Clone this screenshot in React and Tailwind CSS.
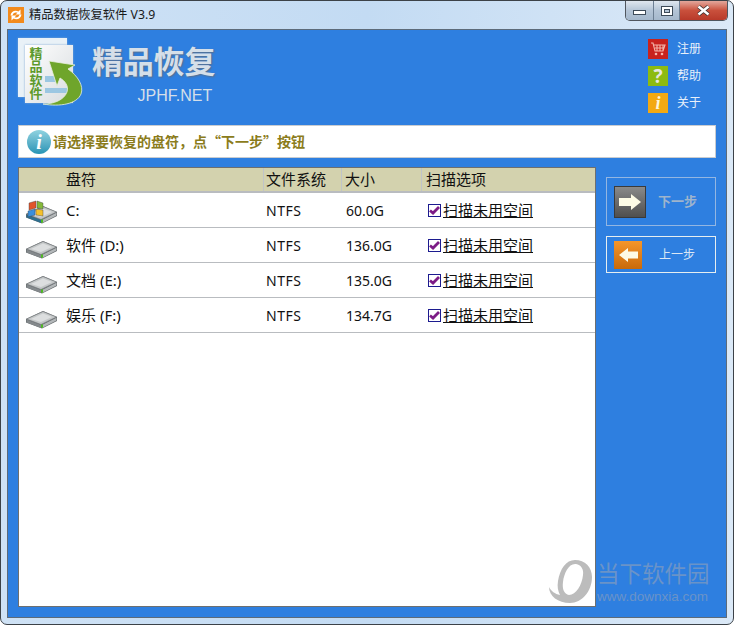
import React from "react";

const rows = [
  { name: "C:", size: "60.0G", sys: true },
  { name: "软件 (D:)", size: "136.0G" },
  { name: "文档 (E:)", size: "135.0G" },
  { name: "娱乐 (F:)", size: "134.7G" },
];

const AppIcon = () => (
  <svg width="16" height="16" viewBox="0 0 16 16">
    <rect width="16" height="16" fill="#f28a1c" />
    <path d="M2.5 8.5C3 4.5 7 2.5 10.5 4.5L12.5 2.5V7.5H7.5L9.5 5.8C7 4.8 5 6 4.5 8.5Z" fill="#fff" />
    <path d="M13.5 7.5C13 11.5 9 13.5 5.5 11.5L3.5 13.5V8.5H8.5L6.5 10.2C9 11.2 11 10 11.5 7.5Z" fill="#fff" />
  </svg>
);

const WindowButtons = () => (
  <div className="flex h-[20px] w-[103px] overflow-hidden rounded-b-[5px] border border-t-0 border-[#50565e]">
    <div className="flex w-[28px] items-center justify-center border-r border-[#6d7f93] bg-gradient-to-b from-[#dfe6ee] via-[#b4c4d6] to-[#a5b8cc]">
      <div className="mt-[3px] h-[5px] w-[13px] border border-[#3d4a58] bg-white" />
    </div>
    <div className="flex w-[26px] items-center justify-center border-r border-[#6d7f93] bg-gradient-to-b from-[#dfe6ee] via-[#b4c4d6] to-[#a5b8cc]">
      <div className="flex h-[10px] w-[12px] items-center justify-center border border-[#3d4a58] bg-white">
        <div className="h-[4px] w-[6px] border border-[#3d4a58] bg-[#b4c4d6]" />
      </div>
    </div>
    <div className="flex flex-1 items-center justify-center bg-gradient-to-b from-[#e2a79c] via-[#c9503c] to-[#b83a2a]">
      <svg width="13" height="11" viewBox="0 0 13 11">
        <path d="M1.5 1.5l10 8M11.5 1.5l-10 8" stroke="#33302f" strokeWidth="4" />
        <path d="M1.5 1.5l10 8M11.5 1.5l-10 8" stroke="#fff" strokeWidth="2.6" />
      </svg>
    </div>
  </div>
);

const Logo = () => (
  <div className="relative h-[70px] w-[66px] shrink-0">
    <div className="absolute left-0 top-0 h-[59px] w-[49px] bg-[#e9f1f7] shadow-[0_0_2px_#7fa7d4]" />
    <div className="absolute left-[7px] top-[7px] h-[58px] w-[48px] bg-gradient-to-br from-white to-[#d8dcdf] shadow-[0_0_2px_#7fa7d4]" />
    <div className="absolute left-[11px] top-[9px] w-[14px] text-center text-[13px] font-bold leading-[13.4px] text-[#5d9a2b]">
      精品软件
    </div>
    <svg className="absolute left-0 top-0" width="66" height="70" viewBox="0 0 66 70">
      <rect x="27" y="38" width="13" height="6" fill="#9cc7e2" />
      <rect x="27" y="50" width="23" height="5" fill="#9cc7e2" />
      <path
        d="M31 23L57 27L50 31C60 38 66 48 63 56C59 66 42 69 25 66C36 66 46 62 49 54C51 48 47 43 42 40L39 48Z"
        fill="#6fa52b"
        stroke="#e8f0e0"
        strokeWidth="0.8"
      />
    </svg>
  </div>
);

const MenuItem = ({ bg, label, children }) => (
  <div className="flex h-[20px] items-center gap-[9px]">
    <div className={`flex h-[20px] w-[20px] items-center justify-center ${bg}`}>{children}</div>
    <span className="text-[12px] text-[#e8f0fa]">{label}</span>
  </div>
);

const DriveIcon = ({ sys }) => (
  <svg width="34" height="28" viewBox="0 0 34 28">
    <path d="M1 18L18 10L32 16V20L17 27.5L1 21.5Z" fill="#5f6467" />
    <path d="M1.5 18L18 10.5L31.5 16L16 23.5Z" fill="#c4c7c8" stroke="#7b8083" strokeWidth="0.7" />
    <path d="M6 18L18 12.5L27 16L16 21Z" fill="#dcdedf" />
    <path d="M1.5 18.5L16 24V27L1.5 21.5Z" fill={sys ? "#2f6f8f" : "#84898c"} />
    <path d="M17 24L31.5 16.8V19.6L17 27Z" fill="#b3b7b9" />
    <rect x="16" y="23.5" width="2" height="3.2" fill="#4dbb22" />
    {sys && (
      <g stroke="#3a3f44" strokeWidth="0.4">
        <path d="M4 7L11 5V12L4 14Z" fill="#e2552b" />
        <path d="M12 5L18 7V13L12 12Z" fill="#85b93a" />
        <path d="M3 15L10 13V19L3 21Z" fill="#3a8fdc" />
        <path d="M11 13L18 14V20L11 19Z" fill="#f5c02c" />
      </g>
    )}
  </svg>
);

const Check = () => (
  <span className="flex h-[13px] w-[13px] items-center justify-center border border-[#1c1b8f] bg-white">
    <svg width="11" height="9" viewBox="0 0 11 9">
      <path d="M1 4.5L4 7l6-6" fill="none" stroke="#7d1c86" strokeWidth="2.8" />
    </svg>
  </span>
);

const HeadCell = ({ className, children }) => (
  <div className={`flex h-full items-center border-r border-[#c0c4c8] pl-[2px] text-[15px] text-[#111] ${className}`}>
    {children}
  </div>
);

const Row = ({ name, size, sys }) => (
  <div className="flex h-[35px] items-center border-b border-[#b9bcc0] text-[14px] text-[#111]">
    <div className="flex w-[245px] items-center">
      <div className="ml-[6px] w-[41px]">
        <DriveIcon sys={sys} />
      </div>
      <span className="text-[15px]">{name}</span>
    </div>
    <div className="w-[78px] pl-[2px] tracking-[0.5px]">NTFS</div>
    <div className="w-[80px] pl-[4px]">{size}</div>
    <div className="flex items-center gap-[2px] pl-[6px]">
      <Check />
      <span className="text-[15px] underline">扫描未用空间</span>
    </div>
  </div>
);

const Watermark = () => (
  <div className="pointer-events-none absolute left-[549px] top-[560px] flex items-start gap-[5px]">
    <svg width="43" height="44" viewBox="0 0 43 44">
      <path
        fillRule="evenodd"
        d="M26 0C36 0 43 7 43 17C43 31 33 43 21 43C9 43 0 36 0 27C2 31 6 34 11 35C9 31 8 27 9 21C11 9 17 0 26 0ZM27 4C20 3 15 13 14 22C13 29 15 34 20 35C27 35 33 25 34 15C35 9 32 5 27 4Z"
        fill="#bcbcbc"
      />
    </svg>
    <div className="text-[#6a93c8]">
      <div className="text-[22.5px] leading-[28px]">当下软件园</div>
      <div className="font-['Liberation_Sans'] text-[13.5px] leading-[18px]">www.downxia.com</div>
    </div>
  </div>
);

export default function App() {
  return (
    <div className="relative h-[625px] w-[734px] overflow-hidden bg-white font-['Noto_Sans','Noto_Sans_CJK_SC',sans-serif]">
      <div className="flex h-[625px] flex-col rounded-[7px] border border-[#3c4248] bg-gradient-to-r from-[#cfe2f5] via-[#c3dbf3] to-[#dbe9f7] px-[6px] pb-[6px]">
        <div className="flex h-[28px] items-start justify-between">
          <div className="flex h-[28px] items-center gap-[5px] pl-[1px]">
            <AppIcon />
            <span className="text-[12.3px] text-[#1a1a1a]">精品数据恢复软件 V3.9</span>
          </div>
          <div className="mr-[-1px]">
            <WindowButtons />
          </div>
        </div>

        <div className="flex flex-1 flex-col border border-[#5d6b7a] bg-[#2e7fe0] pl-[10px] pr-[10px]">
          <div className="flex h-[95px] justify-between pr-[15px] pt-[8px]">
            <div className="flex">
              <Logo />
              <div className="ml-[8px] flex flex-col items-end">
                <div className="mt-[3px] text-[31px] font-bold leading-[40px] tracking-[-0.2px] text-[#d5dfe9] [text-shadow:1px_1px_2px_#5a6f8a]">精品恢复</div>
                <div className="mr-[3px] mt-[3px] font-['Liberation_Sans'] text-[16px] text-[#d5dfe9]">JPHF.NET</div>
              </div>
            </div>
            <div className="mt-[1px] flex flex-col gap-[7px]">
              <MenuItem bg="bg-[#c8221e]" label="注册">
                <svg width="16" height="14" viewBox="0 0 16 14">
                  <path d="M1 1h2l2 8h8l2-6H4M5 6h9M7 3v6M10 3v6M13 3v6" fill="none" stroke="#f4b5ab" strokeWidth="1.1" />
                  <circle cx="6" cy="12" r="1.3" fill="#f4b5ab" />
                  <circle cx="12" cy="12" r="1.3" fill="#f4b5ab" />
                </svg>
              </MenuItem>
              <MenuItem bg="bg-[#8dbb10]" label="帮助">
                <span className="text-[19px] font-bold leading-none text-[#e6e6df]">?</span>
              </MenuItem>
              <MenuItem bg="bg-[#f3a912]" label="关于">
                <span className="font-['Liberation_Serif'] text-[18px] font-bold italic leading-none text-[#fdf6dd]">i</span>
              </MenuItem>
            </div>
          </div>

          <div className="flex h-[33px] items-center gap-[2px] border border-[#c9ccd0] bg-white pl-[8px]">
            <div className="flex h-[24px] w-[24px] items-center justify-center rounded-full bg-gradient-to-b from-[#8fd3e0] to-[#2494b5]">
              <span className="font-['Liberation_Serif'] text-[20px] font-bold italic leading-none text-white">i</span>
            </div>
            <span className="font-['Noto_Sans_CJK_SC'] text-[14px] font-bold text-[#8b7c1c]">请选择要恢复的盘符，点“下一步”按钮</span>
          </div>

          <div className="mt-[9px] flex flex-1 gap-[10px] pb-[10px]">
            <div className="flex w-[578px] flex-col border border-[#6d6f70] bg-white">
              <div className="flex h-[25px] items-center border-b-2 border-[#b9bcc0] bg-[#d3d2ae]">
                <HeadCell className="w-[245px] pl-[47px]">盘符</HeadCell>
                <HeadCell className="w-[78px]">文件系统</HeadCell>
                <HeadCell className="w-[80px] pl-[3px]">大小</HeadCell>
                <div className="pl-[4px] text-[15px] text-[#111]">扫描选项</div>
              </div>
              {rows.map((r) => (
                <Row key={r.name} {...r} />
              ))}
            </div>

            <div className="flex flex-1 flex-col gap-[10px] pt-[10px]">
              <div className="flex h-[49px] items-center gap-[12px] border border-[#93b6e2] pl-[7px]">
                <div className="flex h-[32px] w-[32px] items-center justify-center border border-[#3a3a3a] bg-gradient-to-b from-[#8a8a8a] to-[#4f4f4f]">
                  <svg width="22" height="16" viewBox="0 0 22 16">
                    <path d="M0 4h12V0l10 8-10 8v-4H0z" fill="#fdfbe6" />
                  </svg>
                </div>
                <span className="text-[13px] font-bold text-[#9fb4cc]">下一步</span>
              </div>
              <div className="flex h-[37px] items-center gap-[17px] border border-[#e6eef0] pl-[7px]">
                <div className="flex h-[28px] w-[28px] items-center justify-center bg-gradient-to-b from-[#f5962a] to-[#c96a0a]">
                  <svg width="19" height="14" viewBox="0 0 19 14">
                    <path d="M19 3.5H9V0L0 7l9 7v-3.5h10z" fill="#fdfbe6" />
                  </svg>
                </div>
                <span className="text-[12px] text-[#dbe7f5]">上一步</span>
              </div>
            </div>
          </div>
        </div>
      </div>
      <Watermark />
    </div>
  );
}
